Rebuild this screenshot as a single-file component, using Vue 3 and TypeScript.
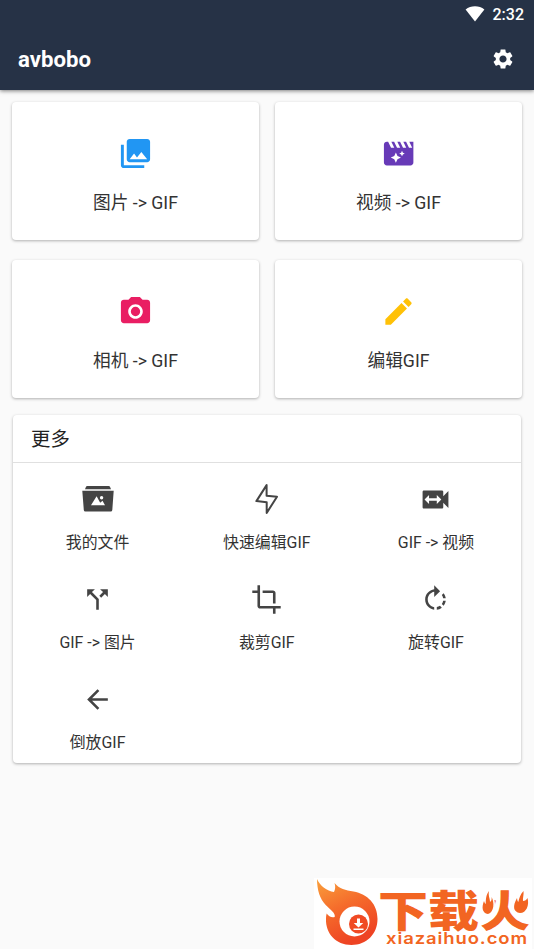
<script setup lang="ts">
interface Tile {
  label: string
  color: string
  path: string
}

interface Tool {
  label: string
  icon: string
  path: string
}

const tiles: Tile[] = [
  {
    label: '图片 -> GIF',
    color: '#2196f3',
    path: 'M22 16V4c0-1.1-.9-2-2-2H8c-1.1 0-2 .9-2 2v12c0 1.1.9 2 2 2h12c1.1 0 2-.9 2-2zm-11-4l2.03 2.71L16 11l4 5H8l3-4zM2 6v14c0 1.1.9 2 2 2h14v-2H4V6H2z',
  },
  {
    label: '视频 -> GIF',
    color: '#673ab7',
    path: 'M22 4h-2.600l2 4h-2.200l-2-4h-1.900l2 4h-2.200l-2-4h-1.900l2 4H11l-2-4H7.100l2 4H6.900L4.900 4H4c-1.100 0-2 .9-2 2v12.200c0 1.100.9 2 2 2h16.200c1.100 0 2-.9 2-2V4zM11.300 15.900L10.200 18.300 9.100 15.900 6.700 14.800 9.100 13.700 10.200 11.300 11.300 13.700 13.700 14.800zM15 12.600L14.400 13.900 13.800 12.600 12.500 12 13.800 11.400 14.400 10.100 15 11.400 16.300 12z',
  },
  {
    label: '相机 -> GIF',
    color: '#e91e63',
    path: 'M12 8.8a3.2 3.2 0 1 0 0 6.4 3.2 3.2 0 1 0 0-6.4zM9 2L7.17 4H4c-1.1 0-2 .9-2 2v12c0 1.1.9 2 2 2h16c1.1 0 2-.9 2-2V6c0-1.1-.9-2-2-2h-3.17L15 2H9zm3 15c-2.76 0-5-2.24-5-5s2.24-5 5-5 5 2.24 5 5-2.24 5-5 5z',
  },
  {
    label: '编辑GIF',
    color: '#ffc107',
    path: 'M3 17.25V21h3.75L17.81 9.94l-3.75-3.75L3 17.25zM20.71 7.04c.39-.39.39-1.02 0-1.41l-2.34-2.34c-.39-.39-1.02-.39-1.41 0l-1.83 1.83 3.75 3.75 1.83-1.83z',
  },
]

const tools: Tool[] = [
  { label: '我的文件', icon: 'files', path: '' },
  { label: '快速编辑GIF', icon: 'bolt', path: '' },
  {
    label: 'GIF -> 视频',
    icon: 'switch',
    path: 'M18 9.5V6c0-.55-.45-1-1-1H3c-.55 0-1 .45-1 1v12c0 .55.45 1 1 1h14c.55 0 1-.45 1-1v-3.5l4 4v-13l-4 4zm-5 6V13H7v2.500L3.500 12 7 8.500V11h6V8.500l3.500 3.500-3.500 3.500z',
  },
  {
    label: 'GIF -> 图片',
    icon: 'split',
    path: 'M14 4l2.290 2.290-2.880 2.880 1.420 1.420 2.880-2.880L20 10V4zm-4 0H4v6l2.290-2.290 4.710 4.700V20h2v-8.410l-5.290-5.300z',
  },
  {
    label: '裁剪GIF',
    icon: 'crop',
    path: 'M17 15h2V7c0-1.100-.9-2-2-2H9v2h8v8zM7 17V1H5v4H1v2h4v10c0 1.100.9 2 2 2h10v4h2v-4h4v-2H7z',
  },
  {
    label: '旋转GIF',
    icon: 'rotate',
    path: 'M15.550 5.550L11 1v3.070C7.060 4.560 4 7.920 4 12s3.050 7.440 7 7.930v-2.020c-2.840-.48-5-2.940-5-5.910s2.160-5.430 5-5.910V10l4.550-4.450zM19.930 11c-.17-1.390-.72-2.730-1.620-3.890l-1.420 1.420c.54.75.88 1.600 1.020 2.470h2.020zM13 17.900v2.020c1.390-.17 2.740-.71 3.900-1.610l-1.440-1.440c-.75.54-1.590.89-2.460 1.030zm3.890-2.420l1.420 1.410c.9-1.160 1.450-2.500 1.620-3.890h-2.020c-.14.87-.48 1.720-1.020 2.480z',
  },
  {
    label: '倒放GIF',
    icon: 'back',
    path: 'M20 11H7.830l5.590-5.590L12 4l-8 8 8 8 1.410-1.410L7.830 13H20v-2z',
  },
]
</script>

<template>
  <div class="screen">
    <header class="app-bar">
      <div class="status">
        <svg class="wifi" viewBox="0 0 20 16"><path d="M10 15.500.6 3.500C3.300 1.300 6.500.2 10 .2s6.700 1.100 9.400 3.300z" /></svg>
        <span>2:32</span>
      </div>
      <div class="toolbar">
        <h1>avbobo</h1>
        <svg class="gear" viewBox="0 0 24 24"><path d="M19.140 12.940c.04-.3.06-.61.06-.94 0-.32-.02-.64-.07-.94l2.030-1.580c.18-.14.23-.41.12-.61l-1.920-3.320c-.12-.22-.37-.29-.59-.22l-2.390.96c-.5-.38-1.030-.7-1.620-.94l-.36-2.540c-.04-.24-.24-.41-.48-.41h-3.840c-.24 0-.43.17-.47.41l-.36 2.540c-.59.24-1.130.57-1.620.94l-2.390-.96c-.22-.08-.47 0-.59.22L2.740 8.870c-.12.21-.08.47.12.61l2.030 1.580c-.05.3-.09.63-.09.94s.02.64.07.94l-2.030 1.580c-.18.14-.23.41-.12.61l1.920 3.320c.12.22.37.29.59.22l2.390-.96c.5.38 1.030.7 1.620.94l.36 2.540c.05.24.24.41.48.41h3.840c.24 0 .44-.17.47-.41l.36-2.540c.59-.24 1.130-.56 1.620-.94l2.390.96c.22.08.47 0 .59-.22l1.920-3.320c.12-.22.07-.47-.12-.61l-2.010-1.580zM12 15.600c-1.980 0-3.600-1.620-3.600-3.600s1.620-3.600 3.600-3.600 3.600 1.620 3.600 3.600-1.620 3.600-3.600 3.600z" /></svg>
      </div>
    </header>

    <main>
      <section class="tiles">
        <article v-for="tile in tiles" :key="tile.label" class="card tile">
          <svg class="tile-icon" viewBox="0 0 24 24" :fill="tile.color"><path :d="tile.path" /></svg>
          <span>{{ tile.label }}</span>
        </article>
      </section>

      <section class="card more">
        <h2>更多</h2>
        <div class="tools">
          <div v-for="tool in tools" :key="tool.label" class="tool">
            <svg v-if="tool.icon === 'files'" class="tool-icon files" viewBox="0 0 32 32">
              <path d="M3 6.300 3.800 4.200Q4.200 3 5.400 3h21.200q1.200 0 1.600 1.200L29 6.300z" />
              <path fill-rule="evenodd" d="M.3 7.700h31.400L30.300 27q-.1 1.500-1.600 1.500H3.400q-1.500 0-1.600-1.500zM9 22.300h14l-2.500-4.600-2.300 2-3.600-6.500zM19.600 13a1.700 1.700 0 1 0 0 3.400 1.700 1.700 0 1 0 0-3.400z" />
            </svg>
            <svg v-else-if="tool.icon === 'bolt'" class="tool-icon bolt" viewBox="0 0 32 32">
              <path d="M15.600 2.100 5.400 18.100l10.300 1.200v10.600L26 13.800l-10.400-1z" />
            </svg>
            <svg v-else class="tool-icon" viewBox="0 0 24 24"><path :d="tool.path" /></svg>
            <span>{{ tool.label }}</span>
          </div>
        </div>
      </section>
    </main>

    <aside class="watermark">
      <svg viewBox="0 0 218 71">
        <defs>
          <linearGradient id="flame" x1="0" y1="0" x2="0.450" y2="1">
            <stop offset="0" stop-color="#f9a03c" />
            <stop offset="0.500" stop-color="#f56b2b" />
            <stop offset="1" stop-color="#ee4323" />
          </linearGradient>
        </defs>
        <path fill="url(#flame)" d="M3 1c3 7 10 12 17 13 1.500-3 1.500-6 .5-9 5 6 11 7 19 8.500 14 2.500 24 12.500 24 27.500 0 15-11 26-26 26-16 0-26-12-25.500-26 0-2 .2-4 .7-5.500 2 3 5 4.500 8 3.500 1-4-4-7-9-12C6 21 3 12 3 1z" />
        <circle cx="40.500" cy="43.500" r="15" fill="#fff" />
        <circle cx="44.500" cy="46" r="9.500" fill="#f04a24" />
        <path fill="#fff" d="M43 40.500h3V45h3.300L44.500 49.500 39.700 45H43zM39.500 50.500h10V52h-10z" />
        <g class="brand">
          <text x="64" y="49" textLength="50" lengthAdjust="spacingAndGlyphs">下</text>
          <text x="114" y="49" textLength="51" lengthAdjust="spacingAndGlyphs">载</text>
          <text x="166" y="49" textLength="50" lengthAdjust="spacingAndGlyphs">火</text>
        </g>
        <path class="spark" d="M175 13c-1 5 1 7 1 11 1.500-1 2-3 1.500-5 3 5 3 15-3.500 17-6-1-6.500-7-4-13 .5 1.500 1 2.500 1.800 3 0-5 .2-9 3.200-13z" />
        <path class="spark" d="M209.500 13c.5 4-1 7-.5 10 2 0 3.500-1 4.500-3 2 7-1 15-7.500 15-7-1-7.500-7-3-15 .3 2 .5 3 1.300 4 1-4 2-8 5.200-11z" />
        <text class="domain" x="72" y="66" textLength="142" lengthAdjust="spacingAndGlyphs">xiazaihuo.com</text>
      </svg>
    </aside>
  </div>
</template>

<style>
body {
  margin: 0;
  background: #fafafa;
}
</style>

<style scoped>
.screen {
  position: relative;
  height: 949px;
  overflow: hidden;
  background: #fafafa;
  color: #333;
  font-family: Roboto, 'Noto Sans CJK SC', sans-serif;
}

.app-bar {
  box-sizing: border-box;
  height: 90px;
  background: #263246;
  color: #fff;
  fill: #fff;
  box-shadow: 0 1px 4px rgba(0, 0, 0, 0.5);
}

.status {
  display: flex;
  align-items: center;
  justify-content: flex-end;
  gap: 8px;
  height: 28px;
  padding-right: 10px;
  font-size: 16px;
  font-weight: 500;
}

.wifi {
  width: 20px;
  height: 16px;
  margin-bottom: 1px;
}

.toolbar {
  display: flex;
  align-items: center;
  justify-content: space-between;
  height: 62px;
  padding: 0 19px 0 18px;
}

h1 {
  margin: 0;
  font-size: 22.200px;
  font-weight: 700;
}

.gear {
  width: 24px;
  height: 24px;
}

main {
  padding: 12px 12px 0;
}

.card {
  background: #fff;
  border-radius: 4px;
  box-shadow: 0 1px 3px rgba(0, 0, 0, 0.3);
}

.tiles {
  display: grid;
  grid-template-columns: repeat(2, 247px);
  grid-auto-rows: 138px;
  gap: 20px 16px;
}

.tile {
  display: flex;
  flex-direction: column;
  align-items: center;
  padding-top: 34px;
  box-sizing: border-box;
  font-size: 17.700px;
  line-height: 26px;
}

.tile-icon {
  width: 35px;
  height: 35px;
  margin-bottom: 19px;
}

.more {
  height: 348px;
  margin: 17px 1px 0;
}

h2 {
  box-sizing: border-box;
  height: 48px;
  margin: 0;
  padding-left: 18px;
  border-bottom: 1px solid #e0e0e0;
  font-size: 19.400px;
  font-weight: 400;
  line-height: 49px;
  color: #222;
}

.tools {
  display: grid;
  grid-template-columns: repeat(3, 169.200px);
  grid-auto-rows: 100.200px;
}

.tool {
  display: flex;
  flex-direction: column;
  align-items: center;
  padding-top: 20.500px;
  font-size: 15.900px;
  line-height: 24px;
}

.tool-icon {
  width: 31px;
  height: 31px;
  margin-bottom: 16.500px;
  fill: #444;
}

.files,
.bolt {
  width: 32px;
  height: 32px;
  margin-top: -1px;
  margin-bottom: 16.500px;
}

.bolt {
  fill: none;
  stroke: #444;
  stroke-width: 2;
  stroke-linejoin: round;
}

.watermark {
  position: absolute;
  right: 2px;
  bottom: 0;
  width: 218px;
  height: 71px;
  background: #fff;
}

.watermark svg {
  display: block;
  width: 218px;
  height: 71px;
}

.brand {
  fill: #f26522;
  font: 900 43px 'Noto Sans CJK SC', sans-serif;
}

.spark {
  fill: #f26522;
  stroke: #fff;
  stroke-width: 3;
  paint-order: stroke;
}

.domain {
  fill: #f26522;
  font: 600 16px Inter, sans-serif;
  letter-spacing: 0.8px;
}
</style>
